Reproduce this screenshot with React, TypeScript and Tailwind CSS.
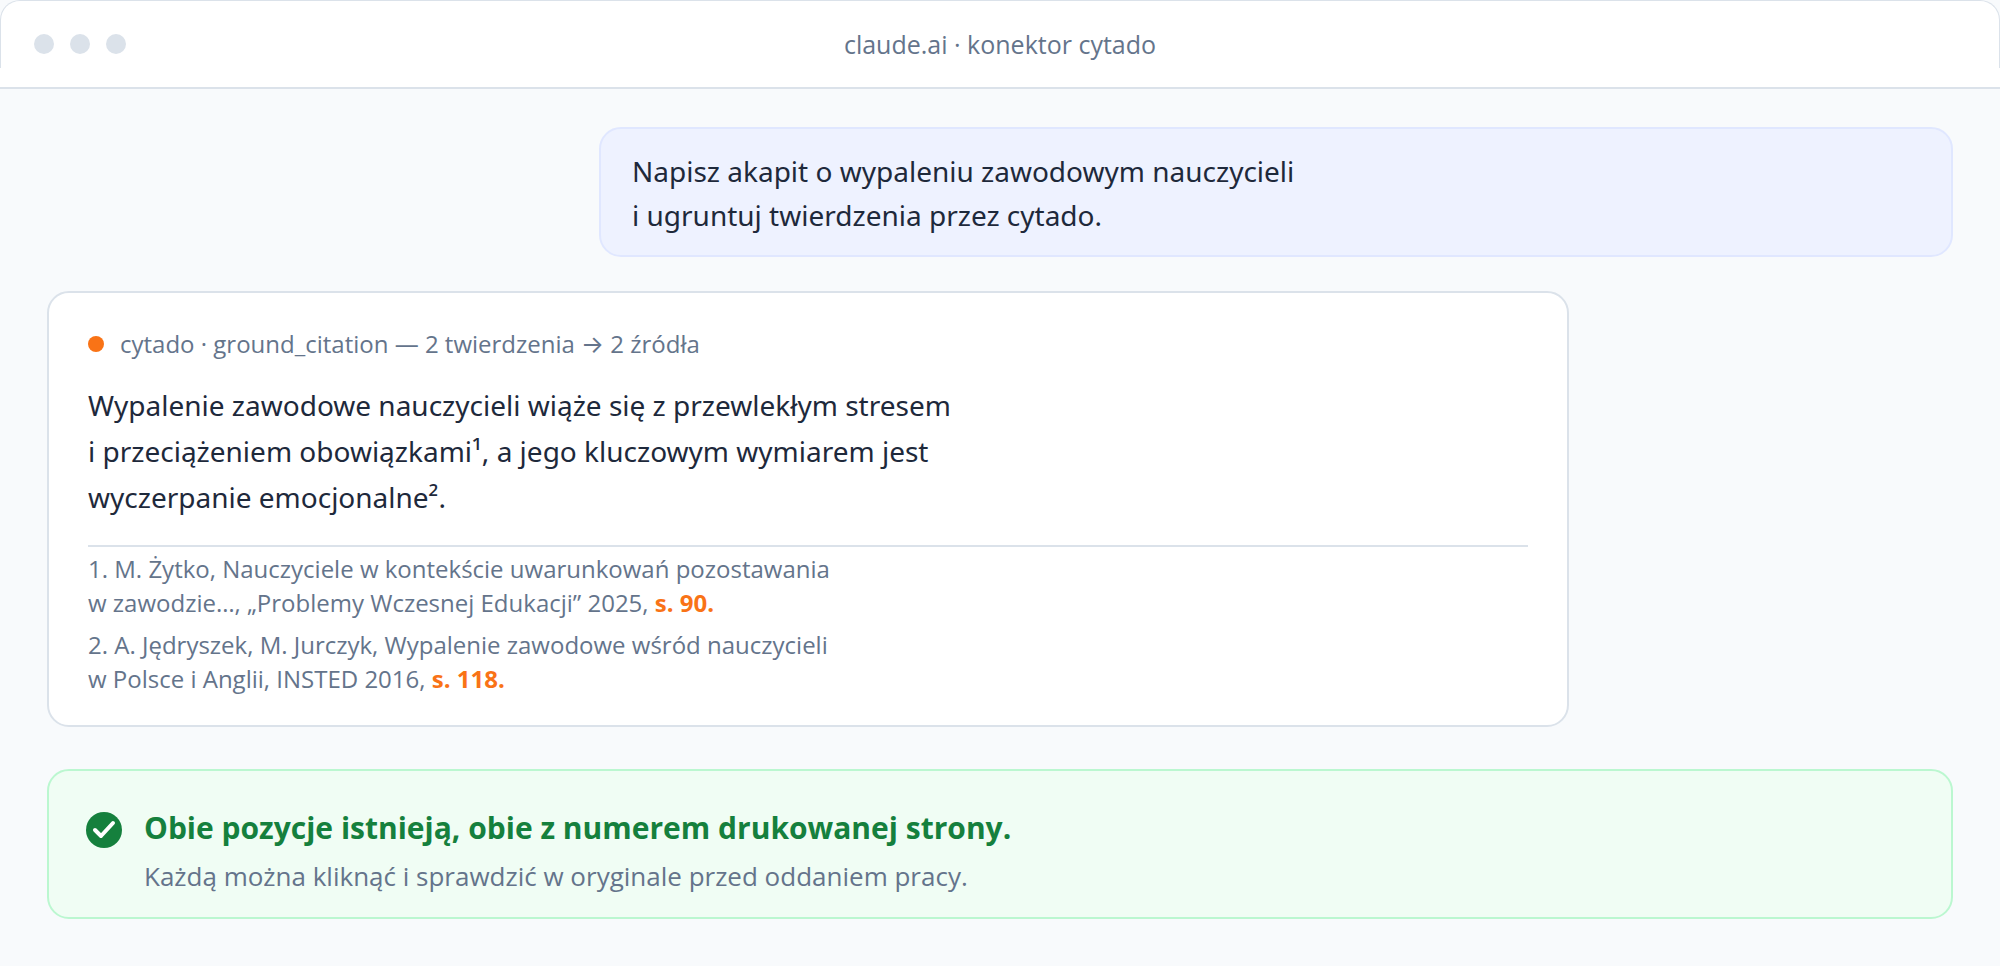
const answerLines = [
  'Wypalenie zawodowe nauczycieli wiąże się z przewlekłym stresem',
  'i przeciążeniem obowiązkami¹, a jego kluczowym wymiarem jest',
  'wyczerpanie emocjonalne².',
];

const sources = [
  {
    id: 1,
    first: '1. M. Żytko, Nauczyciele w kontekście uwarunkowań pozostawania',
    second: 'w zawodzie…, „Problemy Wczesnej Edukacji” 2025,',
    page: 's. 90.',
  },
  {
    id: 2,
    first: '2. A. Jędryszek, M. Jurczyk, Wypalenie zawodowe wśród nauczycieli',
    second: 'w Polsce i Anglii, INSTED 2016,',
    page: 's. 118.',
  },
];

function WindowBar() {
  return (
    <header className="border-b-2 border-[#dbe2ea] bg-white">
      <div className="bg-[#f8fafc]">
        <div className="mb-[19px] grid h-[68px] grid-cols-[1fr_auto_1fr] items-center rounded-t-[20px] border-x border-t border-[#dbe2ea] bg-white px-[33px] pt-[19px]">
          <div className="flex gap-4">
            <span className="h-5 w-5 rounded-full bg-[#dbe2ea]"></span>
            <span className="h-5 w-5 rounded-full bg-[#dbe2ea]"></span>
            <span className="h-5 w-5 rounded-full bg-[#dbe2ea]"></span>
          </div>
          <h1 className="text-[25px] leading-9 text-[#64748b]">claude.ai · konektor cytado</h1>
        </div>
      </div>
    </header>
  );
}

function UserMessage() {
  return (
    <div className="ml-[552px] rounded-[22px] border-2 border-[#e0e7ff] bg-[#eef2ff] px-[31px] pt-5 pb-[18px] font-['Noto_Sans',sans-serif] text-[28px] leading-[44px] text-[#1e293b]">
      <p>
        Napisz akapit o wypaleniu zawodowym nauczycieli
        <br />i ugruntuj twierdzenia przez cytado.
      </p>
    </div>
  );
}

function Answer() {
  return (
    <article className="mt-[34px] mr-96 rounded-[22px] border-2 border-[#dbe2ea] bg-white px-[39px] pt-[34px] pb-[29px]">
      <div className="flex items-center gap-4 text-[24px] leading-[34px] text-[#64748b]">
        <span className="h-4 w-4 rounded-full bg-[#f97316]"></span>
        <span>cytado · ground_citation — 2 twierdzenia → 2 źródła</span>
      </div>

      <p className="mt-[21px] font-['Noto_Sans',sans-serif] text-[28px] leading-[46px] text-[#1e293b]">
        {answerLines.map((line) => (
          <span key={line} className="block">
            {line}
          </span>
        ))}
      </p>

      {/* Sources */}
      <ul className="mt-[25px] flex flex-col gap-2 border-t-2 border-[#dbe2ea] pt-[5px] text-[24px] leading-[34px] text-[#64748b]">
        {sources.map((source) => (
          <li key={source.id}>
            {source.first}
            <br />
            {source.second} <strong className="font-bold text-[#f97316]">{source.page}</strong>
          </li>
        ))}
      </ul>
    </article>
  );
}

function Verdict() {
  return (
    <section className="mt-[42px] flex items-start gap-[22px] rounded-[22px] border-2 border-[#bbf7d0] bg-[#f0fdf4] px-[37px] pt-[31px] pb-[23px]">
      <svg viewBox="0 0 36 36" className="mt-[10px] h-9 w-9 shrink-0" aria-hidden="true">
        <circle cx="18" cy="18" r="18" fill="#15803d" />
        <path
          d="M9 18 L15 24 L27 11"
          fill="none"
          stroke="#fff"
          strokeWidth="4"
          strokeLinecap="round"
          strokeLinejoin="round"
        />
      </svg>
      <div>
        <h2 className="text-[30px] leading-[52px] font-bold text-[#15803d]">
          Obie pozycje istnieją, obie z numerem drukowanej strony.
        </h2>
        <p className="mt-1 text-[26px] leading-9 text-[#64748b]">
          Każdą można kliknąć i sprawdzić w oryginale przed oddaniem pracy.
        </p>
      </div>
    </section>
  );
}

export default function App() {
  return (
    <div className="min-h-screen bg-[#f8fafc] font-['Open_Sans',Inter,sans-serif]">
      <WindowBar />
      <main className="px-[47px] pt-[38px] pb-[47px]">
        <UserMessage />
        <Answer />
        <Verdict />
      </main>
    </div>
  );
}
